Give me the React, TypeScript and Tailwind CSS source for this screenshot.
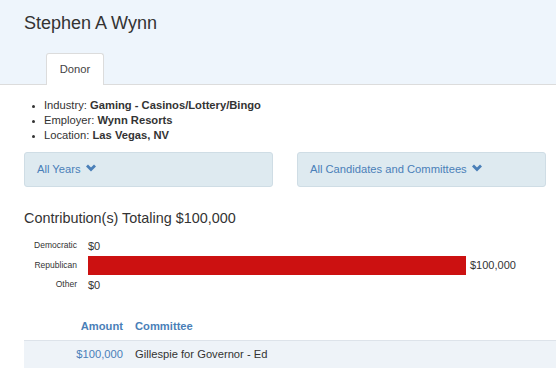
const facts = [
  { label: 'Industry', value: 'Gaming - Casinos/Lottery/Bingo' },
  { label: 'Employer', value: 'Wynn Resorts' },
  { label: 'Location', value: 'Las Vegas, NV' },
];

const parties = [
  { name: 'Democratic', amount: 0, text: '$0' },
  { name: 'Republican', amount: 100000, text: '$100,000' },
  { name: 'Other', amount: 0, text: '$0' },
];

function Chevron() {
  return (
    <svg width="10" height="8" viewBox="0 0 10 8" className="inline-block ml-[5px] -mt-[3px]">
      <path d="M1 1.5 L5 5.5 L9 1.5" fill="none" stroke="#4a7fb8" strokeWidth="2.8" />
    </svg>
  );
}

export default function App() {
  const max = 100000;
  return (
    <div className="w-[556px] h-[377px] overflow-hidden bg-white text-[#333]" style={{ fontFamily: 'Arial, "Liberation Sans", sans-serif' }}>
      <div className="bg-[#eef5fc] border-b border-[#dcdcdc] h-[85px] flex flex-col justify-between">
        <h1 className="text-[18px] pl-[24px] pt-[11px] leading-[24px] text-[#333]">Stephen A Wynn</h1>
        <div className="pl-[46px]">
          <div className="w-[58px] h-[32px] bg-white border border-[#dcdcdc] border-b-0 rounded-t-[3px] flex items-center justify-center text-[11.2px] text-[#444] relative top-px">
            Donor
          </div>
        </div>
      </div>

      <div className="px-[24px]">
        <ul className="mt-[13px] text-[11.2px] leading-[15px] pl-[20px] list-disc marker:text-[9px]">
          {facts.map((f) => (
            <li key={f.label}>
              {f.label}: <span className="font-bold">{f.value}</span>
            </li>
          ))}
        </ul>

        <div className="mt-[9px] w-[522px] grid grid-cols-2 gap-[24px]">
          <div className="h-[35px] bg-[#deeaf0] border border-[#cfdde5] rounded-[3px] flex items-center px-[12px] text-[11.2px] text-[#4a7fb8]">
            All Years <Chevron />
          </div>
          <div className="h-[35px] bg-[#deeaf0] border border-[#cfdde5] rounded-[3px] flex items-center px-[12px] text-[11.2px] text-[#4a7fb8]">
            All Candidates and Committees <Chevron />
          </div>
        </div>

        <h2 className="mt-[22px] text-[14.4px] leading-[18px] text-[#333]">Contribution(s) Totaling $100,000</h2>

        <div className="mt-[9px] flex flex-col">
          {parties.map((p) => (
            <div key={p.name} className="flex items-center h-[19.5px]">
              <div className="w-[64px] text-right text-[8.5px] text-[#333] pr-[11px]">{p.name}</div>
              <div className="flex items-center flex-1">
                {p.amount > 0 && (
                  <div className="h-[19px] bg-[#cc1111]" style={{ width: `${(p.amount / max) * 378}px` }} />
                )}
                <span className={`text-[11px] ${p.amount > 0 ? 'ml-[4px]' : ''}`}>{p.text}</span>
              </div>
            </div>
          ))}
        </div>

        <table className="mt-[19px] w-[532px] text-[11.2px] border-collapse">
          <thead>
            <tr className="h-[27px]">
              <th className="w-[105px] text-right font-bold text-[#4a7fb8] pr-[6px] align-middle">Amount</th>
              <th className="text-left font-bold text-[#4a7fb8] pl-[6px] align-middle">Committee</th>
            </tr>
          </thead>
          <tbody>
            <tr className="h-[27px] bg-[#eef3f8] border-t border-[#dde3ea]">
              <td className="text-right text-[#4a7fb8] pr-[6px]">$100,000</td>
              <td className="pl-[6px] text-[#333]">Gillespie for Governor - Ed</td>
            </tr>
          </tbody>
        </table>
      </div>
    </div>
  );
}
